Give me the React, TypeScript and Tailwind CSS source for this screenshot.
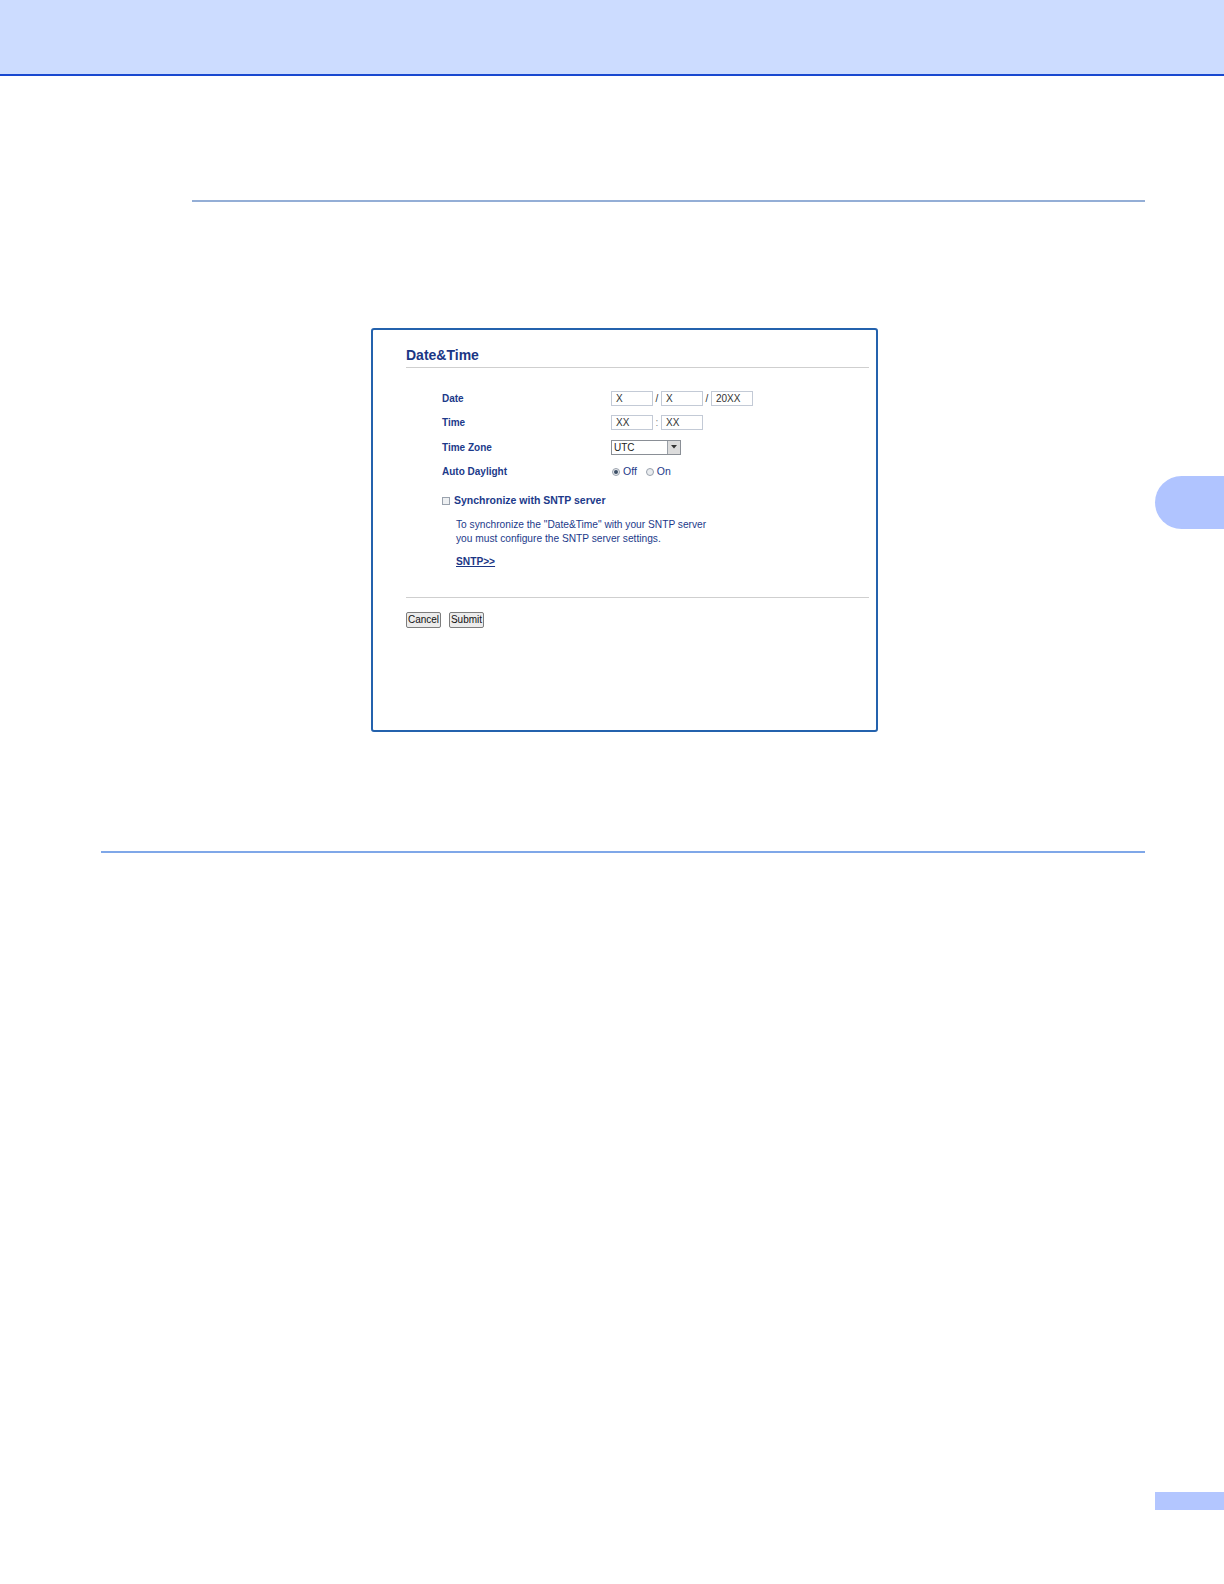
import React from "react";

const label = "text-[10px] font-bold text-[#1c3a8a]";

function TextBox({ value }: { value: string }) {
  return (
    <div className="h-[15px] w-[42px] border border-[#c3cad6] bg-white px-[4px] text-[10px] leading-[13px] text-[#333]">
      {value}
    </div>
  );
}

function Radio({ checked }: { checked?: boolean }) {
  return (
    <span className="flex h-[8px] w-[8px] items-center justify-center rounded-full border border-[#9aa2ad] bg-[#e9ecef]">
      {checked && <span className="h-[4px] w-[4px] rounded-full bg-[#3b4f66]" />}
    </span>
  );
}

function Row({ name, children }: { name: string; children: React.ReactNode }) {
  return (
    <div className="flex h-[24.5px] items-center">
      <div className={`${label} w-[169px]`}>{name}</div>
      <div className="flex items-center">{children}</div>
    </div>
  );
}

function DateTimePanel() {
  return (
    <div className="ml-[371px] mt-[126px] h-[404px] w-[507px] rounded-[3px] border-2 border-[#2462ad] bg-white pl-[33px] pr-[7px]">
      <div className="mt-[17px] border-b border-[#cfcfcf] pb-[3px] text-[14px] font-bold leading-[17px] text-[#1b3685]">
        Date&amp;Time
      </div>

      <div className="mt-[18px] pl-[36px]">
        <Row name="Date">
          <TextBox value="X" />
          <span className="w-[8px] text-center text-[10px] text-[#333]">/</span>
          <TextBox value="X" />
          <span className="w-[8px] text-center text-[10px] text-[#333]">/</span>
          <TextBox value="20XX" />
        </Row>
        <Row name="Time">
          <TextBox value="XX" />
          <span className="w-[8px] text-center text-[10px] text-[#888]">:</span>
          <TextBox value="XX" />
        </Row>
        <Row name="Time Zone">
          <div className="flex h-[15px] w-[70px] border border-[#8a8f96] bg-white">
            <span className="flex-1 pl-[2px] text-[10px] leading-[13px] text-[#222]">UTC</span>
            <span className="flex w-[13px] items-center justify-center border-l border-[#9aa0a8] bg-[#dcdcdc]">
              <svg width="6" height="4" viewBox="0 0 6 4">
                <path d="M0 0 L6 0 L3 3.5 Z" fill="#333" />
              </svg>
            </span>
          </div>
        </Row>
        <Row name="Auto Daylight">
          <div className="flex items-center pl-[1px] text-[10.5px] text-[#1c3a8a]">
            <Radio checked />
            <span className="ml-[3px]">Off</span>
            <span className="ml-[9px]">
              <Radio />
            </span>
            <span className="ml-[3px]">On</span>
          </div>
        </Row>

        <div className="mt-[5px] flex h-[24px] items-center">
          <span className="h-[8px] w-[8px] border border-[#9aa2ad] bg-[#eef0f2]" />
          <span className="ml-[4px] text-[10.5px] font-bold text-[#1c3a8a]">
            Synchronize with SNTP server
          </span>
        </div>

        <div className="mt-[5px] pl-[14px] text-[10.2px] leading-[14px] text-[#1c3a8a]">
          <p>To synchronize the "Date&amp;Time" with your SNTP server</p>
          <p>you must configure the SNTP server settings.</p>
          <p className="mt-[9px] font-bold text-[#1b3685] underline">SNTP&gt;&gt;</p>
        </div>
      </div>

      <div className="mt-[28px] border-t border-[#cfcfcf]" />

      <div className="mt-[14px] flex gap-[8px]">
        {["Cancel", "Submit"].map((b) => (
          <div
            key={b}
            className="flex h-[16px] w-[35px] items-center justify-center rounded-[2px] border border-[#7d7d7d] bg-[#ececec] text-[10px] leading-[14px] text-[#111]"
          >
            {b}
          </div>
        ))}
      </div>
    </div>
  );
}

export default function App() {
  return (
    <div className="relative h-[1584px] w-[1224px] overflow-hidden bg-white font-['Liberation_Sans',Arial,sans-serif]">
      <header className="h-[76px] border-b-2 border-[#1848d0] bg-[#ccdcff]" />

      <div className="ml-[192px] mt-[124px] h-[2px] w-[953px] bg-[#94aed6]" />

      <DateTimePanel />

      <div className="ml-[101px] mt-[119px] h-[2px] w-[1044px] bg-[#7fa7e8]" />

      {/* chapter tab */}
      <div className="absolute left-[1155px] top-[476px] h-[53px] w-[69px] rounded-l-[27px] bg-[#b0c4ff]" />
      {/* page number tab */}
      <div className="absolute left-[1155px] top-[1492px] h-[18px] w-[69px] bg-[#b3c6ff]" />
    </div>
  );
}
